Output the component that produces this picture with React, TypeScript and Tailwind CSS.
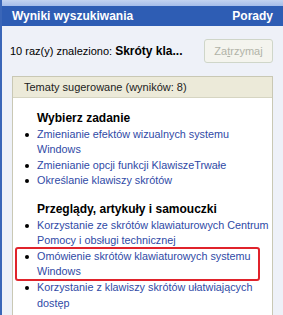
export default function App() {
  const font = { fontFamily: '"Liberation Sans", Arial, sans-serif' };

  return (
    <div
      className="w-[283px] h-[315px] overflow-hidden bg-[#eef1f8] flex flex-col border-l-2 border-[#3a66b8] text-[11px]"
      style={font}
    >
      <div className="h-[6px] bg-gradient-to-b from-[#c3d3f0] to-[#a5bde9]" />
      <div className="h-[20px] bg-[#2e5db4] flex items-center justify-between pl-[10px] pr-[10px] text-white font-bold text-[12px]">
        <span>Wyniki wyszukiwania</span>
        <span>Porady</span>
      </div>

      <div className="flex items-center justify-between pl-[8px] pr-[10px] mt-[13px] h-[24px]">
        <span className="text-black">
          10 raz(y) znaleziono: <b className="text-[12px]">Skróty kla...</b>
        </span>
        <button className="w-[69px] h-[24px] rounded-[3px] border border-[#cfd6c9] bg-[#f4f4ee] text-[#b1b3a8]">
          Za<u>t</u>rzymaj
        </button>
      </div>

      <div className="mt-[13px] ml-[10px] w-[261px] flex-1 border border-[#c9c8b4] border-b-0 bg-white flex flex-col">
        <div className="h-[21px] bg-[#ecead9] border-b border-[#d6d5c2] flex items-center pl-[11px] text-[#222]">
          Tematy sugerowane (wyników: 8)
        </div>

        <div className="pl-[11px] pt-[13px] leading-[15.6px]">
          <div className="font-bold text-[12px] text-black pl-[13px]">Wybierz zadanie</div>
          <Item lines={['Zmienianie efektów wizualnych systemu', 'Windows']} />
          <Item lines={['Zmienianie opcji funkcji KlawiszeTrwałe']} />
          <Item lines={['Określanie klawiszy skrótów']} />

          <div className="font-bold text-[12px] text-black pl-[13px] mt-[13px]">
            Przeglądy, artykuły i samouczki
          </div>
          <Item lines={['Korzystanie ze skrótów klawiaturowych Centrum', 'Pomocy i obsługi technicznej']} />
          <div className="relative">
            <span className="absolute -left-[9px] -top-[2px] -bottom-[1px] w-[245px] border-2 border-[#e0232b] rounded-[3px]" />
            <Item lines={['Omówienie skrótów klawiaturowych systemu', 'Windows']} />
          </div>
          <Item lines={['Korzystanie z klawiszy skrótów ułatwiających', 'dostęp']} />
        </div>
      </div>
    </div>
  );
}

function Item({ lines }: { lines: string[] }) {
  return (
    <div className="flex">
      <span className="w-[13px] shrink-0 flex pt-[6px] pl-[1px]">
        <span className="w-[4px] h-[4px] rounded-full bg-black" />
      </span>
      <div className="text-[#2f4aa6] text-[10.8px] whitespace-nowrap">
        {lines.map((l, i) => (
          <div key={i}>{l}</div>
        ))}
      </div>
    </div>
  );
}
